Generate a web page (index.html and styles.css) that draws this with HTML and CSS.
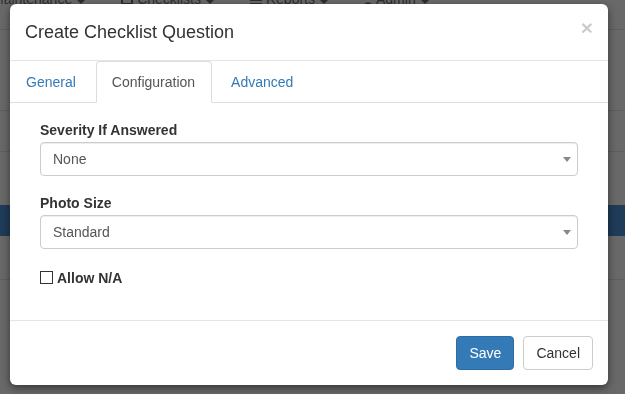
FILE: index.html
```html
<!DOCTYPE html>
<html lang="en">
<head>
    <meta charset="UTF-8">
    <meta name="viewport" content="width=device-width, initial-scale=1.0">
    <title>Create Checklist Question</title>
    <link rel="stylesheet" href="styles.css">
</head>
<body>
<div class="page">
    <div class="navbar">
        <div class="nav-item first">Maintenance <span class="caret"></span></div>
        <div class="nav-item">
            <svg class="nav-icon" width="12" height="14" viewBox="0 0 12 14"><rect x="1" y="2" width="10" height="10" fill="none" stroke="#2e2e2e" stroke-width="2"/></svg>
            Checklists <span class="caret"></span>
        </div>
        <div class="nav-item">
            <svg class="nav-icon" width="12" height="14" viewBox="0 0 12 14"><rect x="0" y="3" width="12" height="2" fill="#2e2e2e"/><rect x="0" y="7" width="12" height="2" fill="#2e2e2e"/><rect x="0" y="11" width="12" height="2" fill="#2e2e2e"/></svg>
            Reports <span class="caret"></span>
        </div>
        <div class="nav-item">
            <svg class="nav-icon" width="8" height="14" viewBox="0 0 8 14"><circle cx="4" cy="4" r="3" fill="#2e2e2e"/><path d="M0 14 C0 9 8 9 8 14 Z" fill="#2e2e2e"/></svg>
            Admin <span class="caret"></span>
        </div>
    </div>
    <div class="bg-row tall"></div>
    <div class="bg-row mid"></div>
    <div class="bg-row plain"></div>
    <div class="bg-band"></div>
    <div class="bg-row low"></div>
</div>

<div class="modal">
    <div class="modal-header">
        <h4 class="modal-title">Create Checklist Question</h4>
        <button class="close" type="button">&times;</button>
    </div>
    <ul class="nav-tabs">
        <li><a href="#">General</a></li>
        <li class="active"><a href="#">Configuration</a></li>
        <li><a href="#">Advanced</a></li>
    </ul>
    <div class="modal-body">
        <div class="form-group">
            <label>Severity If Answered</label>
            <div class="select">
                <span>None</span>
                <svg width="8" height="5" viewBox="0 0 8 5"><polygon points="0,0 8,0 4,5" fill="#888"/></svg>
            </div>
        </div>
        <div class="form-group">
            <label>Photo Size</label>
            <div class="select">
                <span>Standard</span>
                <svg width="8" height="5" viewBox="0 0 8 5"><polygon points="0,0 8,0 4,5" fill="#888"/></svg>
            </div>
        </div>
        <div class="checkbox">
            <span class="box"></span>
            <span>Allow N/A</span>
        </div>
    </div>
    <div class="modal-footer">
        <button class="btn btn-primary" type="button">Save</button>
        <button class="btn btn-default" type="button">Cancel</button>
    </div>
</div>
</body>
</html>
```

FILE: styles.css
```css
body {
    margin: 0;
    height: 394px;
    overflow: hidden;
    background-color: #696969;
    font-family: "Liberation Sans", Arial, sans-serif;
    font-size: 14px;
    color: #333;
}

/* dimmed page behind the dialog */
.navbar {
    display: flex;
    height: 29px;
    border-bottom: 1px solid #5e5e5e;
    color: #2e2e2e;
    font-size: 14px;
    line-height: 20px;
}

.nav-item {
    display: flex;
    align-items: center;
    margin-top: -11px;
    margin-right: 36px;
    height: 20px;
}

.nav-item.first {
    margin-left: -8px;
}

.nav-icon {
    margin-right: 4px;
}

.caret {
    display: inline-block;
    width: 0;
    height: 0;
    margin-left: 5px;
    margin-top: 6px;
    border-top: 4px solid #2e2e2e;
    border-left: 4px solid transparent;
    border-right: 4px solid transparent;
}

.bg-row {
    border-bottom: 1px solid #5e5e5e;
}

.tall {
    height: 80px;
}

.mid {
    height: 40px;
}

.plain {
    height: 53px;
    border-bottom: none;
}

.bg-band {
    height: 31px;
    background-color: #1f3c58;
}

.low {
    height: 43px;
}

/* dialog */
.modal {
    position: fixed;
    top: 4px;
    left: 10px;
    width: 598px;
    background-color: #fff;
    border-radius: 6px;
    box-shadow: 0 3px 9px rgba(0, 0, 0, 0.5);
}

.modal-header {
    display: flex;
    justify-content: space-between;
    align-items: flex-start;
    padding: 15px;
    border-bottom: 1px solid #e5e5e5;
}

.modal-title {
    margin: 0;
    font-size: 18px;
    font-weight: normal;
    line-height: 26px;
}

.close {
    margin-top: -2px;
    padding: 0;
    border: 0;
    background: none;
    font-family: inherit;
    font-size: 21px;
    font-weight: bold;
    line-height: 1;
    color: #000;
    opacity: 0.2;
}

.nav-tabs {
    display: flex;
    margin: 0;
    padding: 0;
    list-style: none;
    border-bottom: 1px solid #ddd;
}

.nav-tabs li {
    margin-bottom: -1px;
}

.nav-tabs a {
    display: block;
    margin-right: 3px;
    padding: 10px 16px 10px 15px;
    line-height: 20px;
    border: 1px solid transparent;
    border-radius: 4px 4px 0 0;
    color: #337ab7;
    text-decoration: none;
}

.nav-tabs .active a {
    color: #555;
    background-color: #fff;
    border-color: #ddd #ddd transparent;
}

.modal-body {
    padding: 17px 30px 32px;
}

.form-group {
    margin-bottom: 17px;
}

.form-group label {
    display: block;
    margin-bottom: 2px;
    font-weight: bold;
    line-height: 20px;
}

.select {
    display: flex;
    align-items: center;
    justify-content: space-between;
    box-sizing: border-box;
    height: 34px;
    padding: 6px 6px 6px 12px;
    border: 1px solid #ccc;
    border-radius: 4px;
    color: #555;
    box-shadow: inset 0 1px 1px rgba(0, 0, 0, 0.075);
}

.checkbox {
    display: flex;
    align-items: center;
    gap: 4px;
    margin-top: 19px;
    font-weight: bold;
    line-height: 20px;
}

.box {
    box-sizing: border-box;
    width: 13px;
    height: 13px;
    margin-top: -1px;
    border: 1px solid #333;
    background-color: #fff;
}

.modal-footer {
    display: flex;
    justify-content: flex-end;
    gap: 9px;
    padding: 15px;
    border-top: 1px solid #e5e5e5;
}

.btn {
    padding: 6px 12px;
    border: 1px solid;
    border-radius: 4px;
    font-family: inherit;
    font-size: 14px;
    line-height: 20px;
}

.btn-primary {
    color: #fff;
    background-color: #337ab7;
    border-color: #2e6da4;
}

.btn-default {
    color: #333;
    background-color: #fff;
    border-color: #ccc;
}
```
